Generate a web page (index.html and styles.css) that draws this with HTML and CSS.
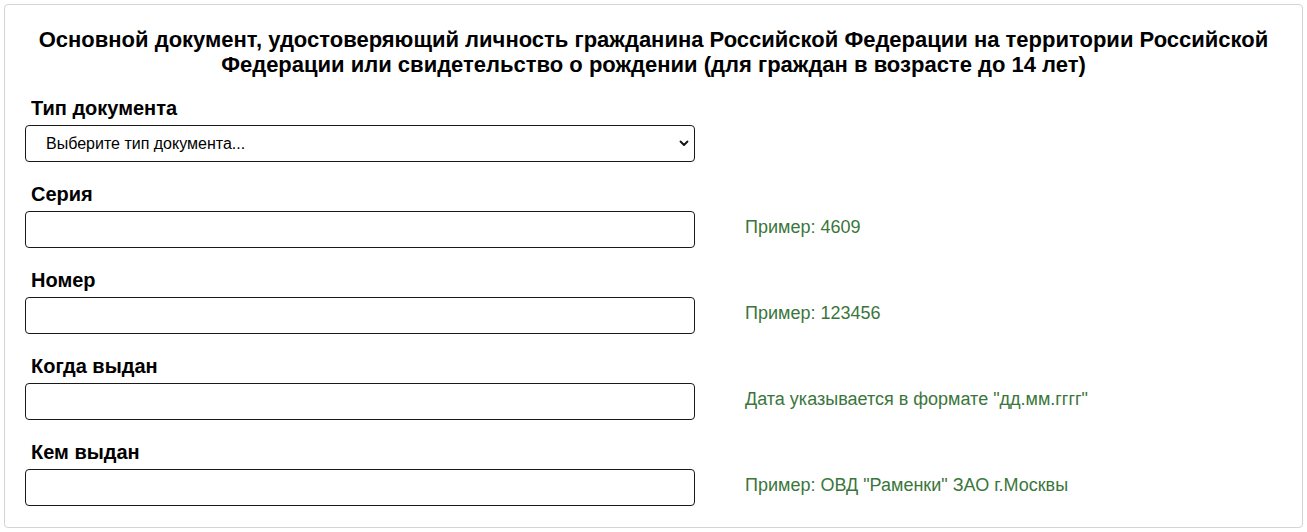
FILE: index.html
```html
<!DOCTYPE html>
<html lang="ru">
<head>
<meta charset="utf-8">
<title>Документ</title>
<link rel="stylesheet" href="styles.css">
</head>
<body>
<div class="card">
  <h2 class="title">Основной документ, удостоверяющий личность гражданина Российской Федерации на территории Российской Федерации или свидетельство о рождении (для граждан в возрасте до 14 лет)</h2>

  <div class="row">
    <label class="label">Тип документа</label>
    <div class="select-wrap">
      <select class="field select">
        <option>Выберите тип документа...</option>
      </select>
      <svg class="chevron" width="10" height="7" viewBox="0 0 10 7"><path d="M1.5 1.5 L5 5 L8.5 1.5" fill="none" stroke="#111" stroke-width="1.8" stroke-linecap="round" stroke-linejoin="round"/></svg>
    </div>
  </div>

  <div class="row">
    <label class="label">Серия</label>
    <input class="field" type="text">
    <div class="hint">Пример: 4609</div>
  </div>

  <div class="row">
    <label class="label">Номер</label>
    <input class="field" type="text">
    <div class="hint">Пример: 123456</div>
  </div>

  <div class="row">
    <label class="label">Когда выдан</label>
    <input class="field" type="text">
    <div class="hint">Дата указывается в формате "дд.мм.гггг"</div>
  </div>

  <div class="row last">
    <label class="label">Кем выдан</label>
    <input class="field" type="text">
    <div class="hint">Пример: ОВД "Раменки" ЗАО г.Москвы</div>
  </div>
</div>
</body>
</html>
```

FILE: styles.css
```css
html, body {
  margin: 0;
  padding: 0;
  background: #fff;
}
body {
  padding: 4px;
  font-family: "Liberation Sans", Arial, sans-serif;
  color: #000;
}
.card {
  border: 1px solid #d4d4d4;
  border-radius: 4px;
  padding: 22px 20px 20px 20px;
  box-sizing: border-box;
  height: 524px;
}
.title {
  margin: 0 0 20px 0;
  font-size: 22px;
  line-height: 25px;
  font-weight: bold;
  text-align: center;
}
.row {
  display: grid;
  grid-template-columns: 670px auto;
  column-gap: 50px;
  align-items: center;
  margin-bottom: 21px;
}
.row.last {
  margin-bottom: 0;
}
.label {
  grid-column: 1 / 3;
  font-size: 20px;
  line-height: 22px;
  font-weight: bold;
  padding-left: 6px;
  margin-bottom: 6px;
}
.field {
  box-sizing: border-box;
  width: 670px;
  height: 37px;
  margin: 0;
  border: 1px solid #1a1a1a;
  border-radius: 4px;
  background: #fff;
  font-family: "Liberation Sans", Arial, sans-serif;
  font-size: 16px;
  color: #000;
  outline: none;
}
.select-wrap {
  position: relative;
  width: 670px;
  height: 37px;
}
.select {
  appearance: none;
  -webkit-appearance: none;
  padding: 0 30px 0 20px;
}
.chevron {
  position: absolute;
  right: 6px;
  top: 15px;
  pointer-events: none;
}
.hint {
  font-size: 18px;
  line-height: 22px;
  color: #3a763b;
  margin-top: -6px;
}
```
